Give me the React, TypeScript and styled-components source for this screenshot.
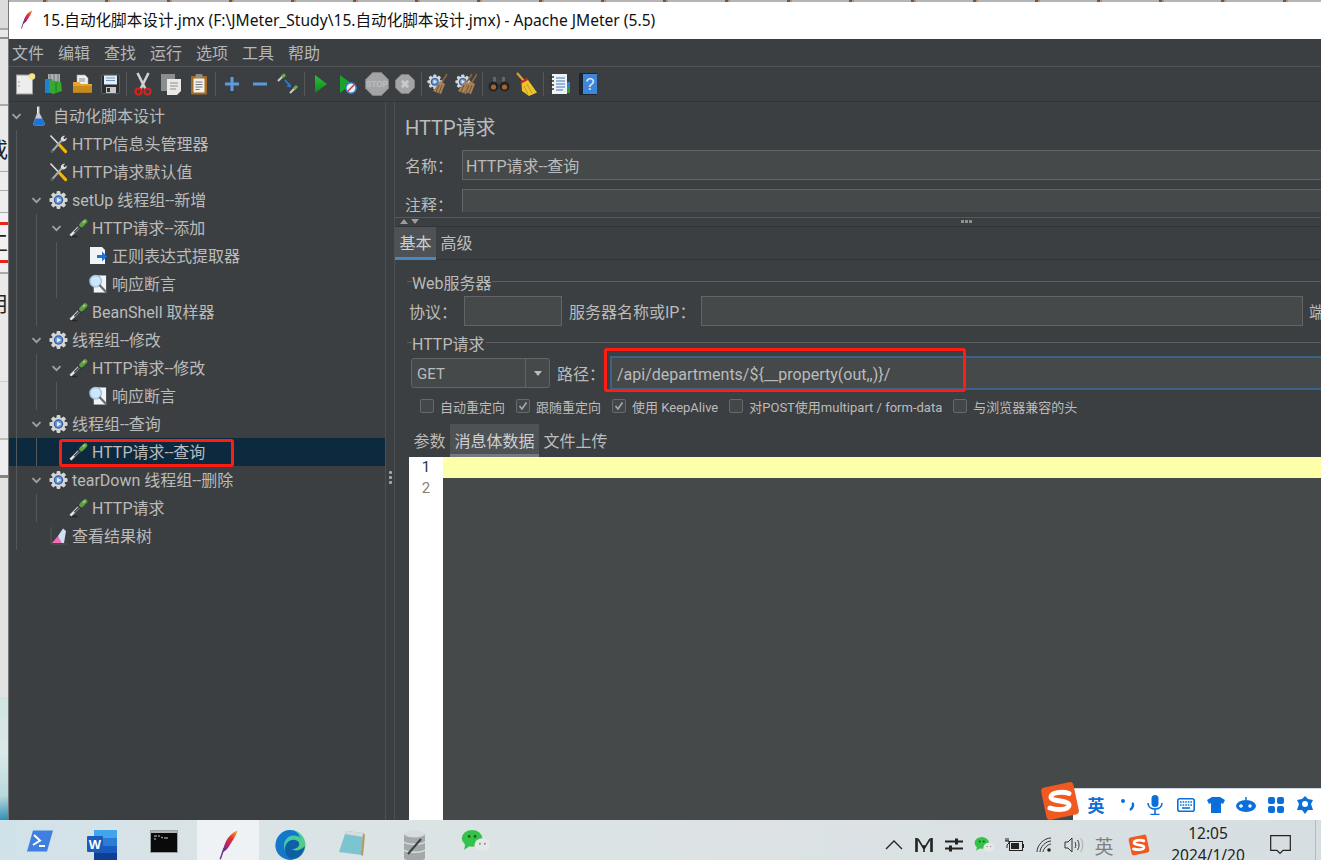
import React from "react";
import styled, { createGlobalStyle } from "styled-components";

const FONT = `Roboto, "Noto Sans CJK SC", sans-serif`;
const UI_FONT = `"Noto Sans", "Noto Sans CJK SC", sans-serif`;
const PATH_TEXT = "/api/departments/${__property(out,,)}/";

const Global = createGlobalStyle`
  html, body { margin: 0; padding: 0; background: #3c3f41; overflow: hidden; }
  * { box-sizing: border-box; }
`;

const Page = styled.div`
  position: relative; width: 1321px; height: 860px; overflow: hidden;
  display: flex; flex-direction: column; font-family: ${FONT}; color: #bbbbbb;
`;
const Desk = styled.div`display: flex; height: 820px;`;
const Strip = styled.div`width: 8px; flex: none; display: flex; flex-direction: column; overflow: hidden;`;
const Band = styled.div<{ $h: number; $bg: string }>`
  height: ${p => p.$h}px; flex: none; background: ${p => p.$bg}; overflow: hidden;
  font-size: 21px; line-height: 30px; color: #222; white-space: nowrap;
`;
const Glyph = styled.span<{ $mt: number }>`display: block; margin: ${p => p.$mt}px 0 0 -13px; color: #222;`;

const Window = styled.div`flex: 1; min-width: 0; display: flex; flex-direction: column; border-left: 1px solid #777;`;
const TopEdge = styled.div`
  height: 2px; flex: none;
  background: repeating-linear-gradient(90deg, #b5b5b5 0 34px, #5d5d5d 34px 37px, #c98b5e 37px 39px, #b5b5b5 39px 62px);
`;
const TitleBar = styled.div`
  height: 37px; flex: none; background: #fff; display: flex; align-items: center;
  padding: 0 0 2px 11px; gap: 9px; color: #111; font-size: 15.6px; font-family: ${UI_FONT};
`;
const MenuBar = styled.div`
  height: 28px; flex: none; background: #3c3f41; display: flex; align-items: center;
  border-bottom: 1px solid #515355;
`;
const MenuItem = styled.div`font-size: 16px; padding: 0 3px 2px; width: 46px; white-space: nowrap; color: #b4b6b7;`;
const Toolbar = styled.div`
  height: 35px; flex: none; display: flex; align-items: center; padding-left: 3px; background: #3c3f41;
  border-bottom: 1px solid #323436;
`;
const ToolBtn = styled.div`width: 28px; height: 34px; display: flex; align-items: center; justify-content: center; flex: none;`;
const ToolSep = styled.div`width: 1px; height: 24px; background: #55585a; margin: 0 2px; flex: none;`;

const Main = styled.div`flex: 1; min-height: 0; display: flex; background: #3c3f41;`;
const Tree = styled.div`
  width: 377px; flex: none; overflow: hidden; isolation: isolate; background: #3c3f41;
  border-right: 1px solid #4d5052; font-size: 16px; position: relative;
`;
const Group = styled.div`margin-left: 7px; border-left: 1px solid #55585a; padding-left: 12px;`;
const Row = styled.div<{ $selected?: boolean }>`
  height: 28px; display: flex; align-items: center; position: relative; white-space: nowrap;
  ${p => p.$selected ? `&::before { content: ""; position: absolute; left: -200px; right: 0; top: 0; bottom: 0; background: #0d293e; z-index: -1; }` : ""}
`;
const Slot = styled.div`width: 14px; flex: none; display: flex; justify-content: center;`;
const IconBox = styled.div<{ $w: number }>`
  width: ${p => p.$w}px; height: 20px; margin: 0 4px 0 6px; flex: none; display: flex; align-items: center; justify-content: center;
`;
const RowLabel = styled.span`line-height: 26px; padding-top: 2px;`;
const RedBox = styled.div<{ $w: number; $h: number; $l: number; $t: number }>`
  position: absolute; left: ${p => p.$l}px; top: ${p => p.$t}px; width: ${p => p.$w}px; height: ${p => p.$h}px;
  border: 3px solid #ff1d13; border-radius: 3px; pointer-events: none;
`;
const Divider = styled.div`
  width: 9px; flex: none; display: flex; flex-direction: column; align-items: center; gap: 2px;
  padding-top: 369px; border-right: 1px solid #4d5052;
`;
const Dot = styled.div`width: 3px; height: 3px; background: #a5a7a8; border-radius: 1px;`;

const Panel = styled.div`flex: 1; min-width: 0; overflow: hidden; display: flex; flex-direction: column;`;
const Inner = styled.div`width: 1000px; flex: 1; display: flex; flex-direction: column;`;
const TopArea = styled.div`height: 110px; flex: none; overflow: hidden;`;
const Heading = styled.div`font-size: 20px; line-height: 28px; margin: 12px 0 0 10px; height: 36px; color: #bbb;`;
const FieldRow = styled.div<{ $ml: number; $mt?: number; $h: number }>`
  display: flex; align-items: center; margin-left: ${p => p.$ml}px; margin-top: ${p => p.$mt || 0}px; height: ${p => p.$h}px; flex: none; white-space: nowrap;
`;
const Label = styled.div<{ $w: number; $pl?: number }>`width: ${p => p.$w}px; padding-left: ${p => p.$pl || 0}px; flex: none; font-size: 16px;`;
const Field = styled.div<{ $w?: number }>`
  ${p => p.$w ? `width:${p.$w}px; flex:none;` : "flex:1;"} height: 100%; background: #45494a; border: 1px solid #646464;
  font-size: 16px; padding-left: 3px; display: flex; align-items: center; white-space: nowrap;
`;
const Tail = styled.div`font-size: 16px; margin-left: 6px; flex: none;`;
const Splitter = styled.div`
  height: 15px; flex: none; position: relative; border-bottom: 1px solid #323436; display: flex; align-items: flex-end; padding: 0 0 1px 5px; gap: 3px;
  &::before { content: ""; position: absolute; left: 0; right: 0; top: 5px; height: 1px; background: #55585a; }
`;
const SplitArrow = styled.div<{ $down?: boolean }>`
  width: 0; height: 0; border-left: 4px solid transparent; border-right: 4px solid transparent;
  ${p => p.$down ? "border-top: 5px solid #9a9c9e;" : "border-bottom: 5px solid #9a9c9e;"}
  margin-bottom: 1px;
`;
const SplitDots = styled.div`
  position: absolute; left: 566px; top: 8px; display: flex; gap: 1px;
  & > div { width: 3px; height: 3px; background: #8d8f91; }
`;
const TabBar = styled.div`height: 33px; flex: none; display: flex; border-bottom: 1px solid #323436;`;
const Tab = styled.div<{ $on?: boolean }>`
  font-size: 16px; padding: 0 4.5px; height: 33px; line-height: 34px; white-space: nowrap; flex: none;
  ${p => p.$on ? "background: #4e5254; border-bottom: 3px solid #4a88c7; color:#d0d0d0;" : ""}
`;
const Legend = styled.div<{ $mt: number }>`
  display: flex; align-items: center; margin: ${p => p.$mt}px 0 0 12px; height: 20px; font-size: 16px; flex: none; white-space: nowrap;
  &::before { content: ""; width: 5px; height: 1px; background: #5d5f61; margin-top: -1px; }
  &::after { content: ""; flex: 1; height: 1px; background: #5d5f61; margin: -1px 0 0 1px; }
`;
const Combo = styled.div`
  width: 139px; height: 30px; flex: none; border: 1px solid #646464; border-radius: 3px; background: #45494a;
  display: flex; align-items: center; font-size: 15px; margin-right: 7px;
`;
const ComboText = styled.div`flex: 1; padding: 2px 0 0 5px;`;
const ComboBtn = styled.div`
  width: 24px; height: 100%; border-left: 1px solid #646464; display: flex; align-items: center; justify-content: center;
  &::after { content: ""; border-left: 4px solid transparent; border-right: 4px solid transparent; border-top: 5px solid #bbb; }
`;
const PathWrap = styled.div`flex: 1; height: 100%; position: relative;`;
const PathField = styled.div`
  height: 100%; background: #45494a; border: 2px solid #3c6288; font-size: 16px; padding: 2px 0 0 5px;
  display: flex; align-items: center; white-space: nowrap;
`;
const Checks = styled.div`display: flex; gap: 11px; margin: 7px 0 0 25px; height: 18px; align-items: center; flex: none; white-space: nowrap;`;
const CheckItem = styled.div`display: flex; align-items: center; gap: 6px; font-size: 13px;`;
const CheckBoxS = styled.div`
  width: 14px; height: 14px; border: 1px solid #666a6c; border-radius: 2px; background: #43474a; flex: none;
  display: flex; align-items: center; justify-content: center;
`;
const SubTabs = styled.div`display: flex; margin: 9px 0 0 14px; height: 33px; flex: none;`;
const SubTab = styled.div<{ $on?: boolean }>`
  font-size: 16px; padding: 0 4.5px; height: 33px; line-height: 35px; white-space: nowrap;
  ${p => p.$on ? "background: #4e5254; border-bottom: 3px solid #75797d; color:#d0d0d0;" : ""}
`;
const Editor = styled.div`flex: 1; min-height: 0; margin-left: 14px; display: flex;`;
const Gutter = styled.div`width: 34px; flex: none; background: #fff; font-size: 15px;`;
const LineNo = styled.div<{ $on?: boolean }>`height: 21px; line-height: 20px; text-align: center; color: ${p => p.$on ? "#24374d" : "#8a7f72"};`;
const Code = styled.div`flex: 1; background: #45494a;`;
const CurLine = styled.div`height: 21px; background: #feffa9;`;

const Taskbar = styled.div`
  height: 40px; flex: none; display: flex; overflow: hidden; color: #222; position: relative;
  background: linear-gradient(90deg, #d0e2e9 0, #dae3e6 200px, #dde3e5 700px, #d6dee1 100%);
  padding-left: 9px;
`;
const TaskItem = styled.div<{ $on?: boolean }>`
  width: 62px; height: 40px; flex: none; display: flex; justify-content: center; padding-top: 10px;
  ${p => p.$on ? "background: #eff2f4; margin-left: 2px;" : ""}
`;
const Tray = styled.div`position: absolute; left: 879px; top: 0; height: 50px; display: flex; align-items: center;`;
const TrayItem = styled.div<{ $w?: number }>`width: ${p => p.$w || 30}px; flex: none; display: flex; justify-content: center; align-items: center; font-size: 19px; color: #808080;`;
const Clock = styled.div`width: 98px; flex: none; text-align: center; font-size: 15.5px; line-height: 22px; color: #222; margin-top: -3px; font-family: ${UI_FONT};`;
const EdgeLine = styled.div`position: absolute; left: 1315px; top: 0; bottom: 0; width: 1px; background: #b5bcc0;`;

const Sogou = styled.div`position: absolute; left: 1040px; top: 781px; width: 281px; height: 40px; display: flex; align-items: flex-end;`;
const SogouLogo = styled.div`position: absolute; left: 0; top: 0; z-index: 1;`;
const SogouBar = styled.div`
  margin-left: 33px; flex: 1; height: 32px; background: #fff; border-top: 1px solid #c9d6e2; margin-bottom: 1px;
  display: flex; align-items: center; color: #0a6fd9;
`;
const SogouItem = styled.div<{ $w: number }>`width: ${p => p.$w}px; flex: none; display: flex; justify-content: center; align-items: center; font-size: 17px; font-weight: 700;`;

/* ---------- icons ---------- */
const Chevron = () => <svg width="11" height="7" viewBox="0 0 11 7"><path d="M1.5 1.2 5.5 5.2 9.5 1.2" fill="none" stroke="#9da0a2" strokeWidth="1.9" /></svg>;

const Feather = ({ s = 16, id }: { s?: number; id: string }) => (
  <svg width={s * 0.7} height={s} viewBox="0 0 14 20">
    <defs><linearGradient id={id} x1="0.8" y1="0" x2="0.2" y2="1"><stop offset="0" stopColor="#f79a2b" /><stop offset=".35" stopColor="#e0322f" /><stop offset=".7" stopColor="#b3226a" /><stop offset="1" stopColor="#5e2a8e" /></linearGradient></defs>
    <path d="M13 .5C9 1.5 5.5 6 4 11l-1 4c2-1 4-3 5.5-6C10 6.5 12 4 13 .5Z" fill={`url(#${id})`} />
    <path d="M4 12 1.5 19.5" stroke="#6a3a92" strokeWidth="1" />
  </svg>
);
const Dropper = () => (
  <svg width="20" height="20" viewBox="0 0 20 20">
    <path d="M1 19h8" stroke="#232527" strokeWidth="1.5" />
    <path d="M1.5 18 11 8.5" stroke="#e2e3e4" strokeWidth="2.8" />
    <path d="M5.5 14.5 11.5 8.5" stroke="#4c4f51" strokeWidth="1.7" />
    <path d="M9.5 7 13 10.5" stroke="#2f3133" strokeWidth="2" />
    <path d="M13 7 17 3" stroke="#5f9e45" strokeWidth="4.6" strokeLinecap="round" />
    <path d="M14.5 4.5 17 2.5" stroke="#a3d882" strokeWidth="1.5" />
  </svg>
);
const Tools = () => (
  <svg width="20" height="20" viewBox="0 0 20 20">
    <path d="M1.5 1 10 10" stroke="#dfe1e2" strokeWidth="1.6" />
    <path d="M10.5 10.5 17.5 18" stroke="#f2b705" strokeWidth="3.2" strokeLinecap="round" />
    <path d="M2.5 18.5 13.5 6" stroke="#a9acae" strokeWidth="2.2" />
    <path d="M12.5 5.5C12 3 14 1 17 1.2L15 3.5 16.5 5 18.8 3.2C19 6 16.5 8 14 7Z" fill="#dcdedf" />
    <circle cx="2.8" cy="17.8" r="1.5" fill="#5c5f61" />
  </svg>
);
const GearShape = () => (
  <>
    <g fill="#d5d6d6">
      <circle cx="10" cy="10" r="7.2" />
      {[0, 45, 90, 135, 180, 225, 270, 315].map(a => <rect key={a} x="8" y="0.5" width="4" height="4" rx="1" transform={`rotate(${a} 10 10)`} />)}
    </g>
    <circle cx="10" cy="10" r="5" fill="#2f5fa8" />
    <circle cx="10" cy="10" r="3.6" fill="#6f97cf" />
    <path d="M8.5 7.5 13 10 8.5 12.5Z" fill="#e9eef5" />
  </>
);
const Gear = () => <svg width="20" height="20" viewBox="0 0 20 20"><GearShape /></svg>;
const Flask = () => (
  <svg width="14" height="20" viewBox="0 0 14 20">
    <path d="M5 .5h2.5v6.5L12.5 17c.7 1.5 0 2.5-1.5 2.5H3C1.5 19.500.8 18.500 1.5 17L5 7Z" fill="#c9ccce" />
    <path d="M3.5 12.5h7L12.5 17c.5 1.5 0 2.5-1.5 2.5H3C1.5 19.500 1 18.500 1.5 17Z" fill="#1f74d8" />
    <path d="M5.5 1v6" stroke="#eef0f1" strokeWidth="1" />
  </svg>
);
const RegexIcon = () => (
  <svg width="19" height="20" viewBox="0 0 19 20">
    <path d="M1 1h12l3 3v14H1Z" fill="#f2f3f4" />
    <path d="M8 9h5V5.5l5 5-5 5V12H8Z" fill="#1d71d6" />
  </svg>
);
const AssertIcon = () => (
  <svg width="20" height="20" viewBox="0 0 20 20">
    <rect x="5" y="1" width="13" height="18" fill="#f2f3f4" />
    <circle cx="7" cy="7" r="6" fill="#cfe6f6" stroke="#9cc4e2" strokeWidth="1.5" />
    <path d="M11 11 18 18.5" stroke="#6a6d70" strokeWidth="2.4" />
  </svg>
);
const ResultIcon = () => (
  <svg width="18" height="18" viewBox="0 0 18 18">
    <path d="M1 0v17h16" fill="none" stroke="#55585a" strokeWidth="1" />
    <path d="M2 16 8 9 12 11 13 16Z" fill="#ee6fb5" />
    <path d="M8 9 13 1.5 16 4 14 16H12Z" fill="#cfe0f5" />
  </svg>
);

const NewIcon = () => (
  <svg width="20" height="22" viewBox="0 0 20 22">
    <rect x=".5" y="2" width="16" height="19" fill="#ecedec" stroke="#9c9e9f" />
    <circle cx="16" cy="3.5" r="3.2" fill="#f5e58a" />
    <circle cx="3" cy="9" r=".8" fill="#999" /><circle cx="3" cy="13" r=".8" fill="#999" />
  </svg>
);
const TemplIcon = () => (
  <svg width="20" height="22" viewBox="0 0 20 22">
    <rect x="4" y="1" width="12" height="9" fill="#aab0b4" />
    <path d="M6 1v8M10 1v8M14 1v8" stroke="#6f7477" strokeWidth="1" />
    <rect x="1" y="6" width="7" height="14" fill="#1f7fd0" />
    <path d="M5 7 17 9 18 18 9 21 5 19Z" fill="#36a832" />
    <path d="M12 9v10" stroke="#1c7a1a" strokeWidth="1" />
  </svg>
);
const FolderIcon = () => (
  <svg width="21" height="20" viewBox="0 0 21 20">
    <path d="M5 1h8l3 3v8H5Z" fill="#efefef" stroke="#aaa" strokeWidth=".6" />
    <path d="M7 5h6M7 7h6" stroke="#8d8d8d" strokeWidth="1" />
    <path d="M1 8h6l2 2h11v8.5H1Z" fill="#e3a52a" />
    <path d="M1 12h19v6.5H1Z" fill="#c9891b" />
  </svg>
);
const SaveIcon = () => (
  <svg width="19" height="20" viewBox="0 0 19 20">
    <rect x=".5" y="1" width="18" height="18.5" rx="1" fill="#2c2d2f" stroke="#68696b" strokeWidth=".8" />
    <rect x="3" y="1.5" width="13" height="9" fill="#e5edf5" />
    <path d="M5 4h9M5 6.5h9" stroke="#6d96c6" strokeWidth="1" />
    <rect x="5" y="13" width="10" height="6" fill="#c8c9ca" />
    <rect x="6" y="14" width="3" height="4" fill="#333" />
  </svg>
);
const CutIcon = () => (
  <svg width="18" height="24" viewBox="0 0 18 24">
    <path d="M3.5 1 11.5 17M14.5 1 6.5 17" stroke="#cfd1d2" strokeWidth="2.6" />
    <circle cx="4.5" cy="19.5" r="3" fill="none" stroke="#d9201c" strokeWidth="2.2" />
    <circle cx="13.5" cy="19.5" r="3" fill="none" stroke="#d9201c" strokeWidth="2.2" />
  </svg>
);
const CopyIcon = () => (
  <svg width="22" height="22" viewBox="0 0 22 22">
    <rect x="1" y="1" width="14" height="17" fill="#8b8d8e" />
    <path d="M7 6h14v12l-4 4H7Z" fill="#e9e9e7" />
    <path d="M10 10h8M10 13h8M10 16h6" stroke="#8d8d8d" strokeWidth="1" />
  </svg>
);
const PasteIcon = () => (
  <svg width="18" height="22" viewBox="0 0 18 22">
    <rect x="1" y="3" width="16" height="18.5" rx="1" fill="#a96d22" />
    <rect x="3.5" y="5.5" width="11" height="14" fill="#f1f1ef" />
    <rect x="5.5" y="1" width="7" height="4" rx="1" fill="#8b8d8e" />
    <path d="M5.5 9h7M5.5 11.5h7M5.5 14h7M5.5 16.5h4" stroke="#777" strokeWidth="1" />
  </svg>
);
const PlusIcon = () => <svg width="16" height="16" viewBox="0 0 16 16"><path d="M8 1v14M1 8h14" stroke="#5d9bdc" strokeWidth="3" /></svg>;
const MinusIcon = () => <svg width="16" height="16" viewBox="0 0 16 16"><path d="M1 8h14" stroke="#5d9bdc" strokeWidth="3" /></svg>;
const ToggleIcon = () => (
  <svg width="22" height="22" viewBox="0 0 22 22">
    <path d="M1 8 6 3" stroke="#c9cbcc" strokeWidth="2" /><path d="M5 4 8 1.5" stroke="#6fae4e" strokeWidth="3" />
    <path d="M13 20 18 15" stroke="#c9cbcc" strokeWidth="2" /><path d="M17 16 20 13" stroke="#6fae4e" strokeWidth="3" />
    <path d="M8 7 13 13" stroke="#2b7bd6" strokeWidth="1.8" /><path d="M14 14.5 9.5 13.5 13 10Z" fill="#2b7bd6" />
  </svg>
);
const RunIcon = () => (
  <svg width="14" height="20" viewBox="0 0 14 20">
    <defs><linearGradient id="rn" x1="0" y1="0" x2="0" y2="1"><stop offset="0" stopColor="#2fbe3a" /><stop offset="1" stopColor="#0b8a1a" /></linearGradient></defs>
    <path d="M1 1 13 10 1 19Z" fill="url(#rn)" />
  </svg>
);
const RunNoIcon = () => (
  <svg width="20" height="20" viewBox="0 0 20 20">
    <path d="M1 1 13 10 1 19Z" fill="#18a32a" />
    <circle cx="12" cy="14" r="5.2" fill="#e8eef7" stroke="#2f76cf" strokeWidth="1.5" />
    <path d="M8.5 17.5 15.5 10.5" stroke="#d9342c" strokeWidth="1.5" />
  </svg>
);
const Octagon = () => <path d="M7 .5h8L21.5 7v8L15 21.5H7L.5 15V7Z" fill="#a2a4a5" stroke="#8b8d8e" strokeWidth=".6" />;
const StopIcon = () => (
  <svg width="24" height="24" viewBox="0 0 22 22">
    <Octagon />
    <text x="11" y="14" textAnchor="middle" fontSize="7.5" fontWeight="700" fill="#bdbfc0" fontFamily="Liberation Sans, sans-serif">STOP</text>
  </svg>
);
const ShutIcon = () => (
  <svg width="20" height="20" viewBox="0 0 22 22">
    <Octagon />
    <path d="M7.5 7.5 14.5 14.5M14.5 7.5 7.5 14.5" stroke="#c9cacb" strokeWidth="3" />
  </svg>
);
const Broomlet = ({ x = 0 }: { x?: number }) => (
  <g transform={`translate(${x} 0)`}>
    <path d="M17 1 12 9" stroke="#8a6a3a" strokeWidth="1.5" />
    <path d="M10 8 15 11 11 21 3 18Z" fill="#a9825a" />
    <path d="M9 12 6 19M12 12 9 20" stroke="#6f5232" strokeWidth="1" />
  </g>
);
const ClearIcon = () => (
  <svg width="22" height="22" viewBox="0 0 22 22">
    <g transform="translate(0 1) scale(.78)"><GearShape /></g>
    <Broomlet x={3} />
  </svg>
);
const ClearAllIcon = () => (
  <svg width="22" height="22" viewBox="0 0 22 22">
    <g transform="translate(0 1) scale(.78)"><GearShape /></g>
    <Broomlet x={0} /><Broomlet x={5} />
  </svg>
);
const BinocIcon = () => (
  <svg width="22" height="18" viewBox="0 0 22 18">
    <path d="M5 2h3v6H5ZM14 2h3v6h-3Z" fill="#666" />
    <rect x="8" y="5" width="6" height="4" fill="#444" />
    <circle cx="5.5" cy="11.5" r="5" fill="#232323" />
    <circle cx="16.5" cy="11.5" r="5" fill="#232323" />
    <circle cx="5.5" cy="12" r="2.6" fill="#a8642c" />
    <circle cx="16.5" cy="12" r="2.6" fill="#a8642c" />
  </svg>
);
const BroomIcon = () => (
  <svg width="22" height="25" viewBox="0 0 22 25">
    <path d="M1 1 8 9" stroke="#d8a22a" strokeWidth="2.2" />
    <path d="M5 11 12 7" stroke="#c8281e" strokeWidth="3" />
    <path d="M5.5 11.5 12 8 21 20.5 13 24 6 19Z" fill="#ecc52a" />
    <path d="M8 14 12 22M11 12 16 21" stroke="#c9962a" strokeWidth="1" />
  </svg>
);
const FuncIcon = () => (
  <svg width="22" height="22" viewBox="0 0 22 22">
    <rect x="3" y="1" width="15" height="20" fill="#f1f2f2" />
    <path d="M1 4h4M1 8h4M1 12h4M1 16h4" stroke="#333" strokeWidth="1.5" />
    <path d="M7 5h9M7 8h9M7 11h9M7 14h9M7 17h7" stroke="#3a78c8" strokeWidth="1.2" />
    <rect x="18" y="9" width="3" height="6" fill="#2f7fd0" />
    <rect x="18" y="15" width="3" height="5" fill="#2e9e3e" />
  </svg>
);
const HelpIcon = () => (
  <svg width="18" height="22" viewBox="0 0 18 22">
    <rect x="0" y="0" width="18" height="22" rx="1" fill="#1c2430" />
    <rect x="4" y="1" width="14" height="20" fill="#3f86d8" />
    <text x="11" y="17" textAnchor="middle" fontSize="16" fill="#e5eef9" fontFamily="Liberation Sans, sans-serif">?</text>
  </svg>
);

const SLogo = ({ s }: { s: number }) => (
  <svg width={s} height={s} viewBox="0 0 40 40">
    <rect x="3.5" y="3.5" width="33" height="33" rx="4" fill="#f0591f" transform="rotate(-12 20 20)" />
    <path d="M29 12.5C22 10 11 11.5 11 16c0 5 19 3 18 8.5C28 29 17 29.5 10 27" fill="none" stroke="#fff" strokeWidth="5" strokeLinecap="round" />
  </svg>
);
const PsIcon = () => (
  <svg width="28" height="22" viewBox="0 0 28 22">
    <path d="M7 .5h20L21 21.5H1Z" fill="#3f7fe0" />
    <path d="M8 5 14 10.5 7 15" fill="none" stroke="#fff" strokeWidth="2" />
    <path d="M13 16h6" stroke="#fff" strokeWidth="2" />
  </svg>
);
const WordIcon = () => (
  <svg width="30" height="30" viewBox="0 0 30 30">
    <rect x="7" y="0" width="23" height="8" fill="#41a5ee" />
    <rect x="7" y="8" width="23" height="8" fill="#2b7cd3" />
    <rect x="7" y="16" width="23" height="7" fill="#185abd" />
    <rect x="7" y="23" width="23" height="7" fill="#103f91" />
    <rect x="0" y="6" width="16" height="16" rx="1" fill="#1a5bbd" />
    <text x="8" y="19" textAnchor="middle" fontSize="13" fontWeight="700" fill="#fff" fontFamily="Liberation Sans, sans-serif">W</text>
  </svg>
);
const CmdIcon = () => (
  <svg width="28" height="23" viewBox="0 0 28 23">
    <rect x=".5" y=".5" width="27" height="22" fill="#0a0a0a" stroke="#9a9fa2" />
    <rect x="1" y="1" width="26" height="2" fill="#b0b5b8" />
    <path d="M4 6h3M8 6h2M11 7l2 1M14 8h4M4 9h2" stroke="#ccc" strokeWidth="1" />
  </svg>
);
const EdgeIcon = () => (
  <svg width="31" height="30" viewBox="0 0 31 30">
    <defs>
      <linearGradient id="eg" x1="0" y1="0" x2="1" y2="1"><stop offset="0" stopColor="#36c6d8" /><stop offset="1" stopColor="#5fd05a" /></linearGradient>
    </defs>
    <circle cx="15.5" cy="15" r="15" fill="url(#eg)" />
    <path d="M.5 15C1 6 8 0 15 0c5 0 9 3 10 8-4-4-12-3-15 3-3 6 1 16 9 19C10 31 0 25 .5 15Z" fill="#1477c9" />
    <path d="M10 19c0-6 5-10 10-9 5 1 5 5 3 7-2 2-7 3-7 1 3 4 9 3 14-2-1 7-6 13-12 13-5 0-8-5-8-10Z" fill="#0f5ea8" />
  </svg>
);
const NotepadIcon = () => (
  <svg width="28" height="27" viewBox="0 0 28 27">
    <path d="M8 1 26 3 24 25 1 22Z" fill="#7cc4cf" />
    <path d="M8 1 26 3 25.5 7 7 4Z" fill="#d8dcdc" />
    <path d="M25 3 27 5 25 26 23 25Z" fill="#b99a5e" />
  </svg>
);
const DbIcon = () => (
  <svg width="23" height="31" viewBox="0 0 23 31">
    <path d="M1 4v24c0 4 21 4 21 0V4Z" fill="#a3a8aa" />
    <ellipse cx="11.5" cy="4" rx="10.5" ry="3.5" fill="#d8dbdc" />
    <path d="M1 12c3 3 18 3 21 0M1 20c3 3 18 3 21 0" stroke="#dcdfe0" strokeWidth="1.5" fill="none" />
    <path d="M5 24 18 9" stroke="#3d3f41" strokeWidth="2" />
  </svg>
);
const WechatIcon = ({ s = 30 }: { s?: number }) => (
  <svg width={s} height={s * 0.72} viewBox="0 0 30 22">
    <ellipse cx="11" cy="8.5" rx="10.5" ry="8.5" fill="#35c24a" />
    <path d="M4 14 3 20 9 16Z" fill="#35c24a" />
    <circle cx="8" cy="6.5" r="1.4" fill="#1b5a24" /><circle cx="14" cy="6.5" r="1.4" fill="#1b5a24" />
    <ellipse cx="21.5" cy="15" rx="8" ry="6.5" fill="#e6e8e8" />
    <circle cx="19" cy="14" r="1" fill="#888" /><circle cx="24" cy="14" r="1" fill="#888" />
  </svg>
);

/* ---------- data ---------- */
type NodeT = { label: string; icon: React.ReactNode; arrow?: boolean; selected?: boolean; children?: NodeT[] };
const sampler = (label: string, extra: Partial<NodeT> = {}): NodeT => ({ label, icon: <Dropper />, ...extra });
const treeData: NodeT = {
  label: "自动化脚本设计", icon: <Flask />, arrow: true, children: [
    { label: "HTTP信息头管理器", icon: <Tools /> },
    { label: "HTTP请求默认值", icon: <Tools /> },
    { label: "setUp 线程组--新增", icon: <Gear />, arrow: true, children: [
      sampler("HTTP请求--添加", { arrow: true, children: [
        { label: "正则表达式提取器", icon: <RegexIcon /> },
        { label: "响应断言", icon: <AssertIcon /> },
      ] }),
      sampler("BeanShell 取样器"),
    ] },
    { label: "线程组--修改", icon: <Gear />, arrow: true, children: [
      sampler("HTTP请求--修改", { arrow: true, children: [
        { label: "响应断言", icon: <AssertIcon /> },
      ] }),
    ] },
    { label: "线程组--查询", icon: <Gear />, arrow: true, children: [
      sampler("HTTP请求--查询", { selected: true }),
    ] },
    { label: "tearDown 线程组--删除", icon: <Gear />, arrow: true, children: [
      sampler("HTTP请求"),
    ] },
    { label: "查看结果树", icon: <ResultIcon /> },
  ],
};

const TreeNode = ({ node, root }: { node: NodeT; root?: boolean }) => (
  <>
    <Row $selected={node.selected}>
      <Slot>{node.arrow && <Chevron />}</Slot>
      <IconBox $w={root ? 20 : 19}>{node.icon}</IconBox>
      <RowLabel>{node.label}</RowLabel>
      {node.selected && <RedBox $l={10} $t={1} $w={175} $h={28} />}
    </Row>
    {node.children && <Group>{node.children.map((c, i) => <TreeNode key={i} node={c} />)}</Group>}
  </>
);

const toolGroups: React.ReactNode[][] = [
  [<NewIcon />, <TemplIcon />, <FolderIcon />, <SaveIcon />],
  [<CutIcon />, <CopyIcon />, <PasteIcon />],
  [<PlusIcon />, <MinusIcon />, <ToggleIcon />],
  [<RunIcon />, <RunNoIcon />, <StopIcon />, <ShutIcon />],
  [<ClearIcon />, <ClearAllIcon />],
  [<BinocIcon />, <BroomIcon />],
  [<FuncIcon />, <HelpIcon />],
];

const bands: { h: number; bg: string; g?: string; mt?: number }[] = [
  { h: 28, bg: "#dcdcdc" }, { h: 2, bg: "#a8a8a8" }, { h: 7, bg: "#e8e8e8" }, { h: 2, bg: "#8f8f8f" },
  { h: 65, bg: "#e5e5e5" }, { h: 2, bg: "#a8a8a8" }, { h: 65, bg: "#eaeaea", g: "或", mt: 29 }, { h: 1, bg: "#aaa" },
  { h: 18, bg: "#ededed" }, { h: 1, bg: "#aaa" }, { h: 21, bg: "#eeeeee" }, { h: 1, bg: "#aaa" },
  { h: 9, bg: "#f1f1f1" }, { h: 3, bg: "#e8231c" }, { h: 35, bg: "#f1f1f1", g: "工", mt: 3 }, { h: 3, bg: "#e8231c" },
  { h: 9, bg: "#efefef" }, { h: 2, bg: "#a8a8a8" }, { h: 107, bg: "#e9e9e9", g: "用", mt: 15 }, { h: 1, bg: "#cfcfcf" },
  { h: 56, bg: "#e8e8e8" }, { h: 2, bg: "#bdbdbd" }, { h: 35, bg: "#efefef" }, { h: 3, bg: "#858585" },
  { h: 219, bg: "#e2e2e2" },
  { h: 123, bg: "linear-gradient(170deg,#cfe4e2 0,#dbe9e9 45%,#b9d8de 80%,#2f8db3 100%)" },
];

export default function App() {
  return (
    <Page>
      <Global />
      <Desk>
        <Strip>
          {bands.map((b, i) => <Band key={i} $h={b.h} $bg={b.bg}>{b.g && <Glyph $mt={b.mt || 0}>{b.g}</Glyph>}</Band>)}
        </Strip>
        <Window>
          <TopEdge />
          <TitleBar>
            <Feather s={19} id="fe1" />
            <span>15.自动化脚本设计.jmx (F:\JMeter_Study\15.自动化脚本设计.jmx) - Apache JMeter (5.5)</span>
          </TitleBar>
          <MenuBar>
            <MenuItem>文件</MenuItem><MenuItem>编辑</MenuItem><MenuItem>查找</MenuItem><MenuItem>运行</MenuItem>
            <MenuItem>选项</MenuItem><MenuItem>工具</MenuItem><MenuItem>帮助</MenuItem>
          </MenuBar>
          <Toolbar>
            {toolGroups.map((g, i) => (
              <React.Fragment key={i}>
                {i > 0 && <ToolSep />}
                {g.map((ic, j) => <ToolBtn key={j}>{ic}</ToolBtn>)}
              </React.Fragment>
            ))}
          </Toolbar>
          <Main>
            <Tree><TreeNode node={treeData} root /></Tree>
            <Divider><Dot /><Dot /><Dot /></Divider>
            <Panel>
              <Inner>
                <TopArea>
                  <Heading>HTTP请求</Heading>
                  <FieldRow $ml={10} $h={30}>
                    <Label $w={57}>名称：</Label>
                    <Field>HTTP请求--查询</Field>
                  </FieldRow>
                  <FieldRow $ml={10} $mt={9} $h={30}>
                    <Label $w={57}>注释：</Label>
                    <Field />
                  </FieldRow>
                </TopArea>
                <Splitter>
                  <SplitArrow /><SplitArrow $down />
                  <SplitDots><div /><div /><div /></SplitDots>
                </Splitter>
                <TabBar>
                  <Tab $on>基本</Tab>
                  <Tab>高级</Tab>
                </TabBar>
                <Legend $mt={12}>Web服务器</Legend>
                <FieldRow $ml={14} $mt={4} $h={30}>
                  <Label $w={55}>协议：</Label>
                  <Field $w={98} />
                  <Label $w={139} $pl={7}>服务器名称或IP：</Label>
                  <Field $w={602} />
                  <Tail>端口号：</Tail>
                </FieldRow>
                <Legend $mt={7}>HTTP请求</Legend>
                <FieldRow $ml={16} $mt={3} $h={34}>
                  <Combo><ComboText>GET</ComboText><ComboBtn /></Combo>
                  <Label $w={53}>路径：</Label>
                  <PathWrap>
                    <PathField>{PATH_TEXT}</PathField>
                    <RedBox $l={-6} $t={-8} $w={362} $h={44} />
                  </PathWrap>
                </FieldRow>
                <Checks>
                  {([["自动重定向", false], ["跟随重定向", true], ["使用 KeepAlive", true], ["对POST使用multipart / form-data", false], ["与浏览器兼容的头", false]] as [string, boolean][]).map(([t, on]) => (
                    <CheckItem key={t}>
                      <CheckBoxS>{on && <svg width="10" height="10" viewBox="0 0 10 10"><path d="M1.5 5 4 8 8.5 1.5" fill="none" stroke="#a9abac" strokeWidth="1.6" /></svg>}</CheckBoxS>
                      <span>{t}</span>
                    </CheckItem>
                  ))}
                </Checks>
                <SubTabs>
                  <SubTab>参数</SubTab>
                  <SubTab $on>消息体数据</SubTab>
                  <SubTab>文件上传</SubTab>
                </SubTabs>
                <Editor>
                  <Gutter><LineNo $on>1</LineNo><LineNo>2</LineNo></Gutter>
                  <Code><CurLine /></Code>
                </Editor>
              </Inner>
            </Panel>
          </Main>
        </Window>
      </Desk>
      <Taskbar>
        <TaskItem><PsIcon /></TaskItem>
        <TaskItem><WordIcon /></TaskItem>
        <TaskItem><CmdIcon /></TaskItem>
        <TaskItem $on><Feather s={30} id="fe2" /></TaskItem>
        <TaskItem><EdgeIcon /></TaskItem>
        <TaskItem><NotepadIcon /></TaskItem>
        <TaskItem><DbIcon /></TaskItem>
        <TaskItem><WechatIcon /></TaskItem>
        <Tray>
          <TrayItem><svg width="18" height="10" viewBox="0 0 18 10"><path d="M1 9 9 1 17 9" fill="none" stroke="#222" strokeWidth="1.3" /></svg></TrayItem>
          <TrayItem><svg width="18" height="14" viewBox="0 0 18 14"><path d="M1.5 0v14M16.5 0v14" stroke="#222" strokeWidth="2.6" /><path d="M3 1 9 11 15 1M9 7v7" fill="none" stroke="#222" strokeWidth="1.6" /></svg></TrayItem>
          <TrayItem><svg width="18" height="16" viewBox="0 0 18 16"><path d="M0 4.5h18M0 11.5h18" stroke="#222" strokeWidth="2" /><rect x="10" y="1.5" width="3" height="6" fill="#222" /><rect x="4" y="8.5" width="3" height="6" fill="#222" /></svg></TrayItem>
          <TrayItem><WechatIcon s={21} /></TrayItem>
          <TrayItem><svg width="20" height="14" viewBox="0 0 20 14"><rect x="5.5" y="3.5" width="13" height="9" fill="none" stroke="#222" /><rect x="7" y="5" width="8" height="6" fill="#222" /><rect x="18.5" y="6" width="1.5" height="4" fill="#222" /><path d="M2 0v3M4 0v3M1 3h4v2L3 7v3" fill="none" stroke="#222" strokeWidth="1" /></svg></TrayItem>
          <TrayItem><svg width="16" height="16" viewBox="0 0 16 16" fill="none" stroke="#333" strokeWidth="1"><path d="M1 15C1 8 8 1 15 1M4 15C4 10 10 4 15 4M7 15c0-3 5-8 8-8" /><circle cx="13" cy="13" r="1.8" fill="#222" stroke="none" /></svg></TrayItem>
          <TrayItem><svg width="20" height="16" viewBox="0 0 20 16" fill="none" stroke="#333" strokeWidth="1"><path d="M1 5h3l4-4v14l-4-4H1Z" /><path d="M11 5c1 2 1 4 0 6M13.5 3c2 3 2 7 0 10" /><path d="M16.5 1c3 4 3 10 0 14" stroke="#aaa" /></svg></TrayItem>
          <TrayItem>英</TrayItem>
          <TrayItem $w={40}><SLogo s={22} /></TrayItem>
          <Clock>12:05<br />2024/1/20</Clock>
          <TrayItem $w={46}><svg width="21" height="21" viewBox="0 0 21 21"><path d="M.7.7h19.6v14.6H13l-3 3-3-3H.7Z" fill="none" stroke="#222" strokeWidth="1.2" /></svg></TrayItem>
        </Tray>
        <EdgeLine />
      </Taskbar>
      <Sogou>
        <SogouLogo><SLogo s={40} /></SogouLogo>
        <SogouBar>
          <SogouItem $w={46}>英</SogouItem>
          <SogouItem $w={18}><svg width="16" height="14" viewBox="0 0 16 14"><circle cx="3" cy="3" r="2" fill="#0a6fd9" /><path d="M12 5c2 1 1 5-2 7" stroke="#0a6fd9" strokeWidth="2.4" fill="none" /></svg></SogouItem>
          <SogouItem $w={36}><svg width="16" height="20" viewBox="0 0 16 20"><rect x="4.5" y="0" width="7" height="12" rx="3.5" fill="#0a6fd9" /><path d="M1 8c0 8 14 8 14 0M8 14v5M3.5 19.5h9" fill="none" stroke="#0a6fd9" strokeWidth="1.6" /></svg></SogouItem>
          <SogouItem $w={26}><svg width="18" height="14" viewBox="0 0 18 14"><rect x=".8" y=".8" width="16.4" height="12.4" rx="2" fill="none" stroke="#0a6fd9" strokeWidth="1.6" /><path d="M3 4h12M3 7h12" stroke="#0a6fd9" strokeWidth="1.6" strokeDasharray="1.6 1" /><path d="M5 10h8" stroke="#0a6fd9" strokeWidth="1.6" /></svg></SogouItem>
          <SogouItem $w={34}><svg width="18" height="16" viewBox="0 0 18 16"><path d="M5 0h8l5 3-2 4-2-1v10H4V6L2 7 0 3Z" fill="#0a6fd9" /></svg></SogouItem>
          <SogouItem $w={26}><svg width="20" height="15" viewBox="0 0 20 15"><path d="M10 0v3" stroke="#0a6fd9" strokeWidth="1.5" /><ellipse cx="10" cy="9" rx="10" ry="6" fill="#0a6fd9" /><path d="M5 7v4M3 9h4" stroke="#fff" strokeWidth="1.3" /><circle cx="14" cy="9" r="1.7" fill="#fff" /></svg></SogouItem>
          <SogouItem $w={34}><svg width="16" height="16" viewBox="0 0 16 16" fill="#0a6fd9"><rect width="7" height="7" rx="2" /><rect x="9" width="7" height="7" rx="2" /><rect y="9" width="7" height="7" rx="2" /><rect x="9" y="9" width="7" height="7" rx="2" /></svg></SogouItem>
          <SogouItem $w={24}><svg width="18" height="18" viewBox="0 0 18 18"><path d="M9 0 12 3 17 4 15 8 17 14 12 14 9 18 6 14 1 14 3 8 1 4 6 3Z" fill="#0a6fd9" /><circle cx="9" cy="8" r="3" fill="#fff" /></svg></SogouItem>
        </SogouBar>
      </Sogou>
    </Page>
  );
}
